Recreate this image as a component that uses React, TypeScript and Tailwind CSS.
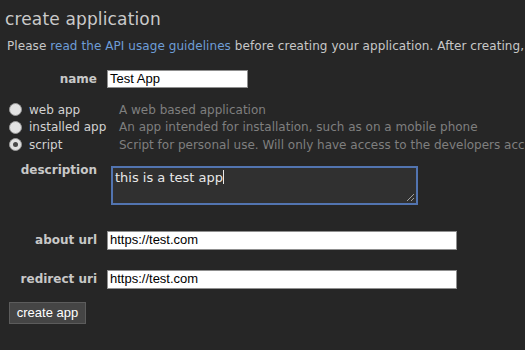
import React from "react";

const Radio = ({ checked }: { checked?: boolean }) => (
  <span className="relative inline-block w-[13px] h-[13px] rounded-full border border-[#9a9a9a] bg-[#e2e2e2] shrink-0">
    {checked && (
      <span className="absolute left-[3px] top-[3px] w-[5px] h-[5px] rounded-full bg-[#4a4a4a]" />
    )}
  </span>
);

export default function App() {
  const rows = [
    { label: "web app", desc: "A web based application", checked: false },
    { label: "installed app", desc: "An app intended for installation, such as on a mobile phone", checked: false },
    { label: "script", desc: "Script for personal use. Will only have access to the developers accounts", checked: true },
  ];
  return (
    <div className="w-[525px] h-[350px] overflow-hidden bg-[#262626] text-[#c8c8c8] whitespace-nowrap font-['DejaVu_Sans',Verdana,sans-serif]">
      <h1 className="pl-[5px] pt-[9px] text-[17px] leading-[20px] tracking-[0.15px] text-[#cacaca]">create application</h1>
      <p className="pl-[7px] mt-[9px] text-[12px] leading-[16px] tracking-[0.07px]">
        Please <span className="text-[#6e9dd6]">read the API usage guidelines</span> before creating your application. After creating, you will be required to register for production API use.
      </p>

      <div className="mt-[16px] flex items-center h-[18px]">
        <span className="w-[97px] shrink-0 text-right font-bold text-[12px] leading-[16px]">name</span>
        <div className="ml-[10px] w-[141px] h-[18px] bg-white border border-[#8f8f8f] pl-[2px] flex items-center text-black text-[13px] font-['Liberation_Sans',Arial,sans-serif]">
          Test App
        </div>
      </div>

      <div className="mt-[13px]">
        {rows.map((r) => (
          <div key={r.label} className="flex items-center h-[17.5px] text-[12px] leading-[16px]">
            <span className="ml-[9px] shrink-0 flex"><Radio checked={r.checked} /></span>
            <span className="ml-[7px] w-[90px] shrink-0 text-[#d2d2d2]">{r.label}</span>
            <span className="shrink-0 text-[#7f7f7f]">{r.desc}</span>
          </div>
        ))}
      </div>

      <div className="mt-[8px] flex items-start">
        <span className="w-[97px] shrink-0 text-right font-bold text-[12px] leading-[16px]">description</span>
        <div className="relative ml-[14px] mt-[4px] w-[307px] h-[39px] bg-[#303030] border-2 border-[#5274b0] pl-[2px] pt-[2px] text-[13px] leading-[15px] text-[#e8e8e8]">
          this is a test app<span className="inline-block w-px h-[14px] bg-[#e8e8e8] align-[-2px]" />
          <svg className="absolute right-[1px] bottom-[1px]" width="9" height="9" viewBox="0 0 9 9">
            <path d="M8 1 L1 8 M8 5 L5 8" stroke="#a0a0a0" strokeWidth="1" />
          </svg>
        </div>
      </div>

      <div className="mt-[26px] flex items-center h-[19px]">
        <span className="w-[97px] shrink-0 text-right font-bold text-[12px] leading-[16px]">about url</span>
        <div className="ml-[10px] w-[350px] h-[19px] bg-white border border-[#8f8f8f] pl-[2px] flex items-center text-black text-[13px] font-['Liberation_Sans',Arial,sans-serif]">
          https://test.com
        </div>
      </div>

      <div className="mt-[20px] flex items-center h-[19px]">
        <span className="w-[97px] shrink-0 text-right font-bold text-[12px] leading-[16px]">redirect uri</span>
        <div className="ml-[10px] w-[350px] h-[19px] bg-white border border-[#8f8f8f] pl-[2px] flex items-center text-black text-[13px] font-['Liberation_Sans',Arial,sans-serif]">
          https://test.com
        </div>
      </div>

      <div className="mt-[13px] pl-[9px]">
        <button className="h-[22px] w-[77px] bg-[#454545] border border-[#5c5c5c] text-white text-[13px] font-['Liberation_Sans',Arial,sans-serif] flex items-center justify-center">
          create app
        </button>
      </div>
    </div>
  );
}
